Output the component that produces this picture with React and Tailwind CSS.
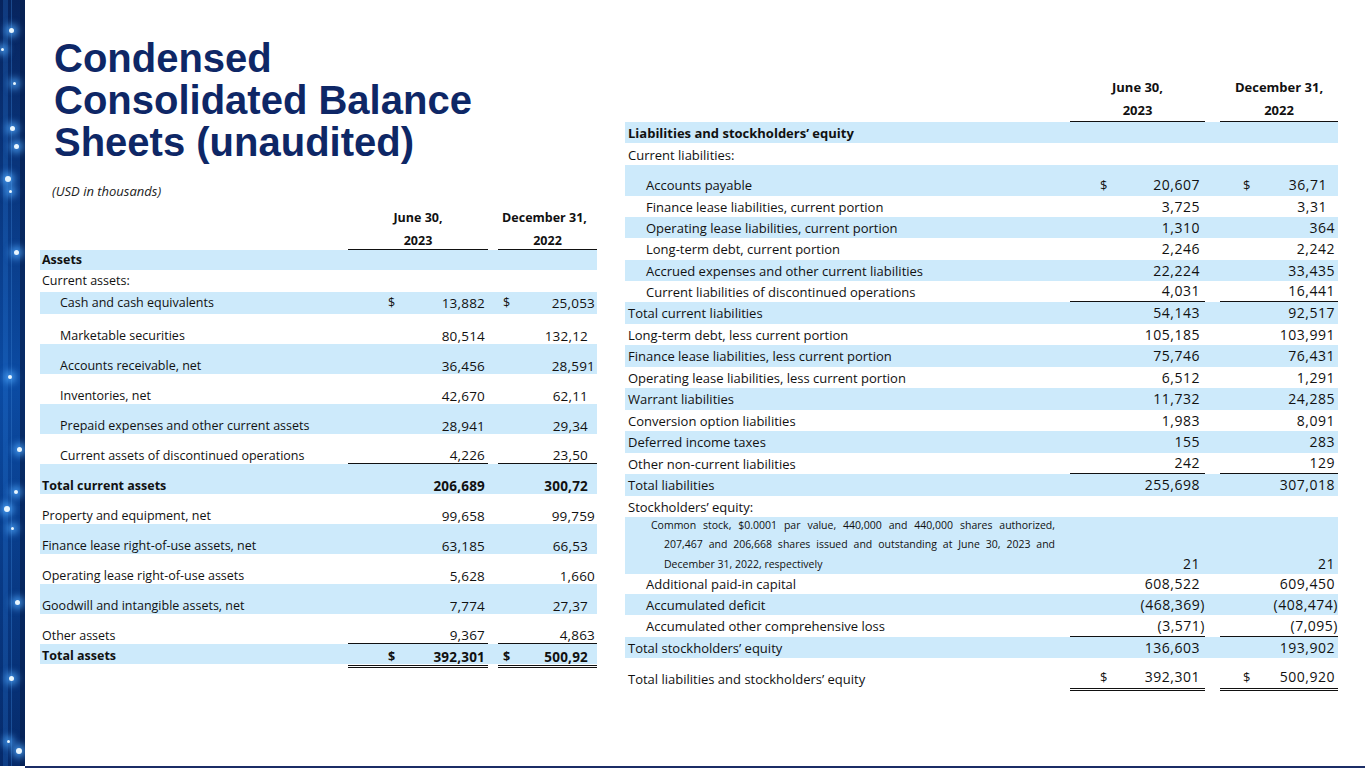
import React from 'react';

const BAND = 'bg-[#cdeafb]';
const LNUM = 'text-[13.5px] tracking-[0.2px]';
const RNUM = 'text-[14px] tracking-[0.5px]';

const leftRows = [
  { label: 'Assets', h: 'h-[20px]', band: true, bold: true, align: 'items-end pb-[2px]' },
  { label: 'Current assets:', h: 'h-[22px]', align: 'items-center' },
  { label: 'Cash and cash equivalents', indent: true, h: 'h-[22px]', band: true, align: 'items-center', a: '13,882', b: '25,053', dollar: true },
  { label: 'Marketable securities', indent: true, a: '80,514', b: '132,12', bCut: true },
  { label: 'Accounts receivable, net', indent: true, band: true, a: '36,456', b: '28,591' },
  { label: 'Inventories, net', indent: true, a: '42,670', b: '62,11', bCut: true },
  { label: 'Prepaid expenses and other current assets', indent: true, band: true, a: '28,941', b: '29,34', bCut: true },
  { label: 'Current assets of discontinued operations', indent: true, a: '4,226', b: '23,50', bCut: true, line: true },
  { label: 'Total current assets', band: true, bold: true, a: '206,689', b: '300,72', bCut: true },
  { label: 'Property and equipment, net', a: '99,658', b: '99,759' },
  { label: 'Finance lease right-of-use assets, net', band: true, a: '63,185', b: '66,53', bCut: true },
  { label: 'Operating lease right-of-use assets', a: '5,628', b: '1,660' },
  { label: 'Goodwill and intangible assets, net', band: true, a: '7,774', b: '27,37', bCut: true },
  { label: 'Other assets', a: '9,367', b: '4,863', line: true },
  { label: 'Total assets', h: 'h-[20px]', band: true, bold: true, a: '392,301', b: '500,92', bCut: true, dollar: true, double: true },
];

const rightRows = [
  { label: 'Liabilities and stockholders\u2019 equity', h: 'h-[21px]', band: true, bold: true },
  { label: 'Current liabilities:', h: 'h-[22px]', align: 'items-end pb-[2px]' },
  { label: 'Accounts payable', indent: true, h: 'h-[31px]', band: true, align: 'items-end pb-[3px]', a: '20,607', b: '36,71', bCut: true, dollar: true },
  { label: 'Finance lease liabilities, current portion', indent: true, h: 'h-[21px]', a: '3,725', b: '3,31', bCut: true },
  { label: 'Operating lease liabilities, current portion', indent: true, h: 'h-[21px]', band: true, a: '1,310', b: '364' },
  { label: 'Long-term debt, current portion', indent: true, h: 'h-[22px]', a: '2,246', b: '2,242' },
  { label: 'Accrued expenses and other current liabilities', indent: true, h: 'h-[21px]', band: true, a: '22,224', b: '33,435' },
  { label: 'Current liabilities of discontinued operations', indent: true, h: 'h-[21px]', a: '4,031', b: '16,441', line: true },
  { label: 'Total current liabilities', h: 'h-[22px]', band: true, a: '54,143', b: '92,517' },
  { label: 'Long-term debt, less current portion', h: 'h-[21px]', a: '105,185', b: '103,991' },
  { label: 'Finance lease liabilities, less current portion', h: 'h-[22px]', band: true, a: '75,746', b: '76,431' },
  { label: 'Operating lease liabilities, less current portion', h: 'h-[21px]', a: '6,512', b: '1,291' },
  { label: 'Warrant liabilities', h: 'h-[22px]', band: true, a: '11,732', b: '24,285' },
  { label: 'Conversion option liabilities', h: 'h-[21px]', a: '1,983', b: '8,091' },
  { label: 'Deferred income taxes', h: 'h-[22px]', band: true, a: '155', b: '283' },
  { label: 'Other non-current liabilities', h: 'h-[21px]', a: '242', b: '129', line: true },
  { label: 'Total liabilities', h: 'h-[22px]', band: true, a: '255,698', b: '307,018' },
  { label: 'Stockholders\u2019 equity:', h: 'h-[21px]' },
  { common: true, h: 'h-[57px]', band: true, align: 'items-end', a: '21', b: '21' },
  { label: 'Additional paid-in capital', indent: true, h: 'h-[20px]', a: '608,522', b: '609,450' },
  { label: 'Accumulated deficit', indent: true, h: 'h-[21px]', band: true, a: '(468,369)', b: '(408,474)' },
  { label: 'Accumulated other comprehensive loss', indent: true, h: 'h-[22px]', a: '(3,571)', b: '(7,095)', line: true },
  { label: 'Total stockholders\u2019 equity', h: 'h-[21px]', band: true, a: '136,603', b: '193,902' },
];

function LeftTable() {
  return (
    <div className="w-[557px] text-[12.5px] text-[#111] font-['Open_Sans',sans-serif]">
      <div className="flex h-[24px] items-center font-bold">
        <div className="w-[308px]" />
        <div className="w-[140px] text-center">June 30,</div>
        <div className="w-[10px]" />
        <div className="w-[99px] text-center pr-[6px] whitespace-nowrap">December 31,</div>
      </div>
      <div className="flex h-[20px] font-bold">
        <div className="w-[308px]" />
        <div className="w-[140px] text-center border-b border-[#111] leading-[16px] pt-[3px]">2023</div>
        <div className="w-[10px]" />
        <div className="w-[99px] text-center border-b border-[#111] leading-[16px] pt-[3px]">2022</div>
      </div>
      {leftRows.map((r, i) => {
        const align = r.align || 'items-end';
        const border = r.line ? 'border-b border-[#111]' : '';
        const dbl = r.double ? 'border-b-[3px] border-double border-[#111] -mb-[4px]' : '';
        return (
          <div key={i} className={`flex ${r.h || 'h-[30px]'} ${r.band ? BAND : ''} ${r.bold ? 'font-bold' : ''}`}>
            <div className={`w-[308px] flex ${align} leading-[16px] ${r.indent ? 'pl-[20px]' : 'pl-[2px]'}`}>
              <span>{r.label}</span>
            </div>
            <div className={`w-[140px] flex ${align} leading-[16px] ${border} ${dbl}`}>
              {r.dollar && <span className="ml-[40px]">$</span>}
              <span className={`ml-auto pr-[3px] ${LNUM}`}>{r.a}</span>
            </div>
            <div className="w-[10px]" />
            <div className={`w-[99px] flex ${align} leading-[16px] ${border} ${dbl}`}>
              {r.dollar && <span className="ml-[5px]">$</span>}
              <span className={`ml-auto ${LNUM} ${r.bCut ? 'pr-[9px]' : 'pr-[2px]'}`}>{r.b}</span>
            </div>
          </div>
        );
      })}
    </div>
  );
}

function RightTable() {
  return (
    <div className="w-[713px] text-[13px] text-[#111] font-['Open_Sans',sans-serif]">
      <div className="flex h-[24px] items-center font-bold">
        <div className="w-[445px]" />
        <div className="w-[135px] text-center">June 30,</div>
        <div className="w-[15px]" />
        <div className="w-[118px] text-center">December 31,</div>
      </div>
      <div className="flex h-[22px] font-bold">
        <div className="w-[445px]" />
        <div className="w-[135px] text-center border-b border-[#111] leading-[16px] pt-[2px]">2023</div>
        <div className="w-[15px]" />
        <div className="w-[118px] text-center border-b border-[#111] leading-[16px] pt-[2px]">2022</div>
      </div>
      {rightRows.map((r, i) => {
        const align = r.align || 'items-center';
        const border = r.line ? 'border-b border-[#111]' : '';
        const isParenA = r.a && r.a.startsWith('(');
        const isParenB = r.b && r.b.startsWith('(');
        return (
          <div key={i} className={`flex ${r.h} ${r.band ? BAND : ''} ${r.bold ? 'font-bold' : ''}`}>
            <div className={`w-[445px] flex ${align} leading-[16px] ${r.indent ? 'pl-[21px]' : 'pl-[3px]'}`}>
              {r.common ? (
                <p className="w-[404px] ml-[23px] pl-[13px] -indent-[13px] text-[10.5px] leading-[19.5px] text-justify">
                  Common stock, $0.0001 par value, 440,000 and 440,000 shares authorized, 207,467 and 206,668 shares issued and outstanding at June 30, 2023 and December 31, 2022, respectively
                </p>
              ) : (
                <span>{r.label}</span>
              )}
            </div>
            <div className={`w-[135px] flex ${align} leading-[16px] ${border} ${r.common ? 'pb-[2px]' : ''}`}>
              {r.dollar && <span className="ml-[30px]">$</span>}
              <span className={`ml-auto ${RNUM} ${isParenA ? 'pr-0' : 'pr-[5px]'}`}>{r.a}</span>
            </div>
            <div className="w-[15px]" />
            <div className={`w-[118px] flex ${align} leading-[16px] ${border} ${r.common ? 'pb-[2px]' : ''}`}>
              {r.dollar && <span className="ml-[23px]">$</span>}
              <span className={`ml-auto ${RNUM} ${isParenB ? 'pr-0' : r.bCut ? 'pr-[11px]' : 'pr-[3px]'}`}>{r.b}</span>
            </div>
          </div>
        );
      })}
      <div className="h-[9px]" />
      <div className="flex h-[24px]">
        <div className="w-[445px] flex items-center leading-[16px] pl-[3px] pb-[1px]">
          <span>Total liabilities and stockholders&rsquo; equity</span>
        </div>
        <div className="w-[135px] flex items-center leading-[16px] pb-[1px] border-b-[3px] border-double border-[#111]">
          <span className="ml-[30px]">$</span>
          <span className={`ml-auto pr-[5px] ${RNUM}`}>392,301</span>
        </div>
        <div className="w-[15px]" />
        <div className="w-[118px] flex items-center leading-[16px] pb-[1px] border-b-[3px] border-double border-[#111]">
          <span className="ml-[23px]">$</span>
          <span className={`ml-auto pr-[3px] ${RNUM}`}>500,920</span>
        </div>
      </div>
    </div>
  );
}

const dots = [
  { t: 28, l: 9, s: 5 }, { t: 48, l: 1, s: 3 }, { t: 82, l: 13, s: 3 }, { t: 126, l: 10, s: 5 },
  { t: 144, l: 14, s: 5 }, { t: 176, l: 5, s: 6 }, { t: 190, l: 9, s: 3 }, { t: 250, l: 14, s: 5 },
  { t: 375, l: 8, s: 4 }, { t: 447, l: 17, s: 5 }, { t: 490, l: 14, s: 4 }, { t: 506, l: 4, s: 6 },
  { t: 527, l: 11, s: 3 }, { t: 600, l: 15, s: 5 }, { t: 676, l: 9, s: 5 }, { t: 740, l: 7, s: 3 },
  { t: 748, l: 16, s: 6 },
];

function Strip() {
  return (
    <div className="relative w-[25px] h-full shrink-0 bg-gradient-to-b from-[#07245e] via-[#0b4ba3] to-[#062a6a] overflow-hidden">
      <div className="absolute inset-y-0 left-[11px] w-[1px] bg-[#3a7fd0]/40" />
      <div className="absolute inset-y-0 left-[3px] w-[5px] bg-[#2a7fe0]/25" />
      <div className="absolute inset-y-0 right-0 w-[5px] bg-[#06204f]/70" />
      {dots.map((d, i) => (
        <div
          key={i}
          className="absolute rounded-full bg-[#e8f6ff] shadow-[0_0_7px_4px_rgba(80,170,255,0.75)]"
          style={{ top: d.t, left: d.l, width: d.s, height: d.s }}
        />
      ))}
    </div>
  );
}

export default function App() {
  return (
    <div className="w-[1365px] h-[768px] bg-white flex flex-col overflow-hidden">
      <div className="flex h-[766px]">
        <Strip />
        <div className="w-[572px] shrink-0 pl-[15px] flex flex-col">
          <h1 className="pl-[14px] pt-[37px] text-[40px] leading-[42px] font-bold text-[#0e2766] font-['Liberation_Sans',Arial,sans-serif]">
            Condensed
            <br />
            Consolidated Balance
            <br />
            Sheets (unaudited)
          </h1>
          <p className="pl-[12px] mt-[20px] text-[13px] leading-[16px] italic text-[#222] font-['Open_Sans',sans-serif]">
            (USD in thousands)
          </p>
          <div className="mt-[7px]">
            <LeftTable />
          </div>
        </div>
        <div className="pl-[28px] pt-[76px]">
          <RightTable />
        </div>
      </div>
      <div className="h-[2px] ml-[25px] bg-[#1b2d66]" />
    </div>
  );
}
